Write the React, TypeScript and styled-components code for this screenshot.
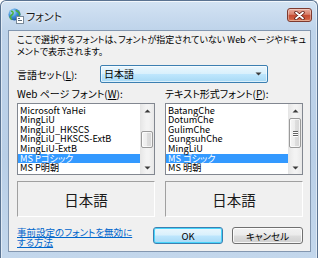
import React from "react";
import styled, { createGlobalStyle } from "styled-components";

const GlobalStyle = createGlobalStyle`
  html, body {
    margin: 0;
    padding: 0;
    background: #ffffff;
  }
  body {
    font-family: "Noto Sans CJK JP", "Noto Sans", sans-serif;
    font-feature-settings: "palt";
    color: #000;
  }
`;

const webFonts = [
  "Microsoft YaHei",
  "MingLiU",
  "MingLiU_HKSCS",
  "MingLiU_HKSCS-ExtB",
  "MingLiU-ExtB",
  "MS Pゴシック",
  "MS P明朝",
];

const textFonts = [
  "BatangChe",
  "DotumChe",
  "GulimChe",
  "GungsuhChe",
  "MingLiU",
  "MS ゴシック",
  "MS 明朝",
];

const GlobeIcon = () => (
  <svg width="16" height="16" viewBox="0 0 16 16">
    <defs>
      <radialGradient id="g" cx="0.35" cy="0.3" r="0.8">
        <stop offset="0" stopColor="#bfe6ff" />
        <stop offset="0.5" stopColor="#3c8fd8" />
        <stop offset="1" stopColor="#1a4f9a" />
      </radialGradient>
    </defs>
    <circle cx="6.5" cy="6.5" r="6" fill="url(#g)" />
    <path d="M3 3.5c1.5-.5 2.5.5 2 2s-2 1.5-2.5 3S3 11 4 11.5M8 2c.5 1.5 2 1.5 3 2.5s0 2.5 1 3" fill="none" stroke="#4caf3f" strokeWidth="1.6" />
    <rect x="8.5" y="8.5" width="7" height="7" fill="#ffffff" stroke="#7a8a9a" />
    <path d="M10 12.5h4M10 10.5h2" stroke="#5a6a7a" strokeWidth="1" />
  </svg>
);

const CloseGlyph = () => (
  <svg width="11" height="9" viewBox="0 0 11 9">
    <path d="M2 1.5l7 6M9 1.5l-7 6" stroke="#5a1a12" strokeWidth="3.4" strokeLinecap="round" />
    <path d="M2 1.5l7 6M9 1.5l-7 6" stroke="#ffffff" strokeWidth="1.8" strokeLinecap="round" />
  </svg>
);

const Triangle = ({ up }: { up?: boolean }) => (
  <svg width="7" height="4" viewBox="0 0 7 4">
    <path d={up ? "M0.5 3.5L3.5 0.5L6.5 3.5Z" : "M0.5 0.5L3.5 3.5L6.5 0.5Z"} fill="#3b3b3b" />
  </svg>
);

type ScrollProps = { thumbTop: number; thumbHeight: number; grip?: boolean };

const ScrollBarView = ({ thumbTop, thumbHeight, grip }: ScrollProps) => (
  <ScrollBar>
    <ScrollArrow>
      <Triangle up />
    </ScrollArrow>
    <ScrollTrack>
      <Thumb $top={thumbTop} $height={thumbHeight}>
        {grip && (
          <Grip>
            <span />
            <span />
            <span />
          </Grip>
        )}
      </Thumb>
    </ScrollTrack>
    <ScrollArrow>
      <Triangle />
    </ScrollArrow>
  </ScrollBar>
);

type FontListProps = { items: string[]; selected: number; scroll: ScrollProps };

const FontList = ({ items, selected, scroll }: FontListProps) => (
  <ListBox>
    <ListItems>
      {items.map((name, i) => (
        <ListItem key={name + i} $selected={i === selected}>
          {name}
        </ListItem>
      ))}
    </ListItems>
    <ScrollBarView {...scroll} />
  </ListBox>
);

export default function App() {
  return (
    <>
      <GlobalStyle />
      <Window>
        <TitleBar>
          <GlobeIcon />
          <TitleText>フォント</TitleText>
          <CloseButton>
            <CloseGlyph />
          </CloseButton>
        </TitleBar>
        <Client>
          <Description>
            ここで選択するフォントは、フォントが指定されていない Web ページやドキュ
            <br />
            メントで表示されます。
          </Description>
          <LangRow>
            <FieldLabel>
              言語セット(<u>L</u>):
            </FieldLabel>
            <Select>
              <SelectValue>日本語</SelectValue>
              <Triangle />
            </Select>
          </LangRow>
          <Columns>
            <Column>
              <FieldLabel>
                Web ページ フォント(<u>W</u>):
              </FieldLabel>
              <FontList
                items={webFonts}
                selected={5}
                scroll={{ thumbTop: 14, thumbHeight: 17 }}
              />
              <Preview>日本語</Preview>
            </Column>
            <Column>
              <FieldLabel>
                テキスト形式フォント(<u>P</u>):
              </FieldLabel>
              <FontList
                items={textFonts}
                selected={5}
                scroll={{ thumbTop: 1, thumbHeight: 30, grip: true }}
              />
              <Preview>日本語</Preview>
            </Column>
          </Columns>
          <BottomRow>
            <HelpLink href="#">
              事前設定のフォントを無効に
              <br />
              する方法
            </HelpLink>
            <Buttons>
              <Button $default>OK</Button>
              <Button>キャンセル</Button>
            </Buttons>
          </BottomRow>
        </Client>
      </Window>
    </>
  );
}

const Window = styled.div`
  width: 318px;
  height: 258px;
  box-sizing: border-box;
  border: 1px solid #5a7391;
  border-bottom: none;
  border-radius: 6px 6px 0 0;
  background: linear-gradient(180deg, #d3e3f3 0%, #bed3ea 30px, #b9cfe7 60%, #c3d7ec 100%);
  box-shadow: inset 0 1px 0 rgba(255, 255, 255, 0.7), inset 1px 0 0 rgba(255, 255, 255, 0.5),
    inset -1px 0 0 rgba(255, 255, 255, 0.5);
  display: flex;
  flex-direction: column;
`;

const TitleBar = styled.div`
  height: 29px;
  display: flex;
  align-items: flex-start;
  padding: 7px 5px 0 7px;
  box-sizing: border-box;
  svg {
    flex: none;
  }
`;

const TitleText = styled.div`
  margin-left: 2px;
  font-size: 11px;
  line-height: 16px;
  color: #1b1b1b;
  text-shadow: 0 0 6px rgba(255, 255, 255, 0.95), 0 0 3px rgba(255, 255, 255, 0.9);
`;

const CloseButton = styled.div`
  margin-left: auto;
  width: 25px;
  height: 14px;
  box-sizing: border-box;
  border: 1px solid #7d3a2f;
  border-radius: 3px;
  background: linear-gradient(180deg, #e9ac9d 0%, #d9806b 45%, #c54b33 50%, #cf5f40 85%, #e08a62 100%);
  box-shadow: inset 0 0 0 1px rgba(255, 255, 255, 0.35);
  display: flex;
  align-items: center;
  justify-content: center;
`;

const Client = styled.div`
  margin: 0 6px 0 7px;
  height: 222px;
  box-sizing: border-box;
  border: 1px solid #8397b0;
  background: #f0f0f0;
  padding: 0 7px 0 8px;
  display: flex;
  flex-direction: column;
`;

const Description = styled.div`
  margin-top: 3px;
  font-size: 9px;
  line-height: 11.5px;
  white-space: nowrap;
`;

const LangRow = styled.div`
  display: flex;
  align-items: center;
  margin-top: 8px;
  & > div:first-child {
    width: 83px;
  }
`;

const FieldLabel = styled.div`
  font-size: 10px;
  line-height: 11px;
  white-space: nowrap;
  u {
    text-decoration: underline;
    text-underline-offset: 1px;
  }
`;

const Select = styled.div`
  width: 168px;
  height: 18px;
  box-sizing: border-box;
  border: 1px solid #3c7fb1;
  border-radius: 2px;
  background: linear-gradient(180deg, #eaf6fd 0%, #d9f0fc 48%, #bee6fd 52%, #a7d9f5 100%);
  box-shadow: inset 0 0 0 1px rgba(255, 255, 255, 0.6);
  display: flex;
  align-items: center;
  padding: 0 5px 0 3px;
`;

const SelectValue = styled.div`
  flex: 1;
  font-size: 10px;
  line-height: 14px;
`;

const Columns = styled.div`
  display: grid;
  grid-template-columns: 138px 138px;
  column-gap: 10px;
  margin-top: 5px;
`;

const Column = styled.div`
  display: flex;
  flex-direction: column;
  & > ${FieldLabel} {
    margin-bottom: 4px;
  }
`;

const ListBox = styled.div`
  height: 72px;
  box-sizing: border-box;
  border: 1px solid #828790;
  background: #ffffff;
  display: flex;
  overflow: hidden;
`;

const ListItems = styled.div`
  flex: 1;
  padding-top: 1.5px;
  min-width: 0;
`;

const ListItem = styled.div<{ $selected?: boolean }>`
  height: 9.67px;
  line-height: 9.67px;
  font-size: 9.2px;
  padding-left: 2px;
  white-space: nowrap;
  background: ${(p) => (p.$selected ? "#3399ff" : "transparent")};
  color: ${(p) => (p.$selected ? "#ffffff" : "#000000")};
`;

const ScrollBar = styled.div`
  width: 13px;
  flex: none;
  display: flex;
  flex-direction: column;
  background: linear-gradient(90deg, #e8e8e8, #f3f3f3 40%, #f3f3f3 60%, #e8e8e8);
  border-left: 1px solid #e6e6e6;
`;

const ScrollArrow = styled.div`
  height: 13px;
  display: flex;
  align-items: center;
  justify-content: center;
`;

const ScrollTrack = styled.div`
  flex: 1;
  display: flex;
  flex-direction: column;
`;

const Thumb = styled.div<{ $top: number; $height: number }>`
  margin-top: ${(p) => p.$top}px;
  height: ${(p) => p.$height}px;
  margin-right: 1px;
  box-sizing: border-box;
  border: 1px solid #9a9a9a;
  border-radius: 2px;
  background: linear-gradient(90deg, #f4f4f4 0%, #ececec 50%, #dedede 51%, #d6d6d6 100%);
  box-shadow: inset 0 0 0 1px rgba(255, 255, 255, 0.7);
  display: flex;
  align-items: center;
  justify-content: center;
`;

const Grip = styled.div`
  display: flex;
  flex-direction: column;
  gap: 1px;
  span {
    display: block;
    width: 5px;
    height: 1px;
    background: #636363;
    box-shadow: 0 1px 0 #ffffff;
  }
`;

const Preview = styled.div`
  margin-top: 6px;
  height: 36px;
  box-sizing: border-box;
  border-top: 1px solid #a0a0a0;
  border-left: 1px solid #a0a0a0;
  border-right: 1px solid #ffffff;
  border-bottom: 1px solid #ffffff;
  display: flex;
  align-items: center;
  justify-content: center;
  font-size: 14.5px;
  color: #1a1a1a;
`;

const BottomRow = styled.div`
  display: flex;
  align-items: flex-start;
  margin-top: 10px;
`;

const HelpLink = styled.a`
  flex: 1;
  font-size: 9.5px;
  line-height: 10px;
  color: #0066cc;
  text-decoration: underline;
  white-space: nowrap;
`;

const Buttons = styled.div`
  display: flex;
  gap: 9px;
`;

const Button = styled.div<{ $default?: boolean }>`
  width: ${(p) => (p.$default ? 70 : 71)}px;
  height: 17px;
  box-sizing: border-box;
  border: 1px solid ${(p) => (p.$default ? "#3c7fb1" : "#707070")};
  border-radius: 3px;
  background: ${(p) =>
    p.$default
      ? "linear-gradient(180deg, #eaf6fd 0%, #d9f0fc 48%, #bee6fd 52%, #a7d9f5 100%)"
      : "linear-gradient(180deg, #f2f2f2 0%, #ebebeb 48%, #dddddd 52%, #cfcfcf 100%)"};
  box-shadow: inset 0 0 0 1px ${(p) => (p.$default ? "#48d5fb" : "rgba(255,255,255,0.8)")};
  display: flex;
  align-items: center;
  justify-content: center;
  font-size: 9.5px;
  line-height: 12px;
`;
